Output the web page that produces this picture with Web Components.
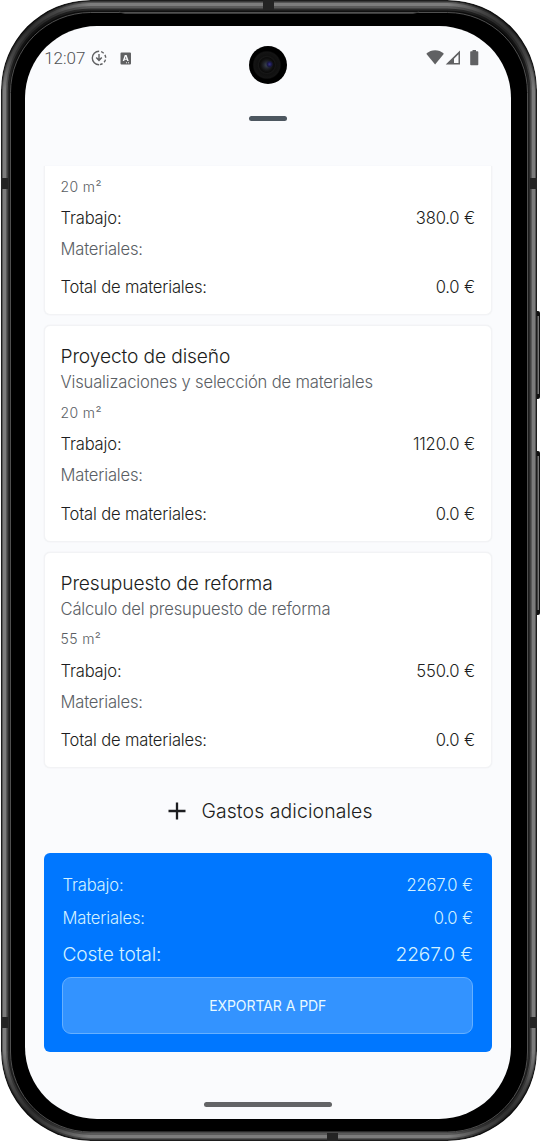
<!DOCTYPE html>
<html lang="es">
<head>
<meta charset="utf-8">
<title>Presupuesto</title>
<style>
html,body{margin:0;height:100%;background:#fff;overflow:hidden}
body{font-family:Inter,"Noto Sans",sans-serif;font-weight:280;color:#1c1d20}
</style>
</head>
<body>
<phone-frame>
  <status-bar>12:07</status-bar>
  <sheet-handle></sheet-handle>
  <budget-list>
    <budget-card continued area="20 m²" work="380.0 €" total="0.0 €"></budget-card>
    <budget-card area="20 m²" work="1120.0 €" total="0.0 €"><span slot="title">Proyecto de diseño</span><span slot="desc">Visualizaciones y selección de materiales</span></budget-card>
    <budget-card area="55 m²" work="550.0 €" total="0.0 €"><span slot="title">Presupuesto de reforma</span><span slot="desc">Cálculo del presupuesto de reforma</span></budget-card>
  </budget-list>
  <add-button>Gastos adicionales</add-button>
  <total-panel></total-panel>
  <home-bar></home-bar>
</phone-frame>
<script>
function define(name, html){
  customElements.define(name, class extends HTMLElement{
    constructor(){
      super();
      const t=document.createElement('template');
      t.innerHTML=typeof html==='function'?html(this):html;
      this.attachShadow({mode:'open'}).append(t.content.cloneNode(true));
    }
  });
}

define('phone-frame',`
<style>
:host{display:block;position:relative;box-sizing:border-box;width:540px;height:1141px;padding:26px 29px 22px 25px}
svg{position:absolute;left:0;top:0}
.screen{position:relative;box-sizing:border-box;height:1093px;border-radius:72px;background:#fafbfd;display:flex;flex-direction:column;padding:0 18.700px 0 18.700px;overflow:hidden}
.camera{position:absolute;left:249px;top:46px;width:38px;height:38px;border-radius:50%;
 background:radial-gradient(circle at 54% 48%,#35308a 0,#181742 8%,transparent 13%),radial-gradient(circle at 47% 50%,#3e4855 0,#22252c 12%,#111 22%,#0b0b0b 27%,#171717 30%,#101010 35%,#141414 47%,#000 52%)}
</style>
<svg width="540" height="1141" viewBox="0 0 540 1141">
 <defs>
  <radialGradient id="d"><stop offset="0" stop-color="#000" stop-opacity=".65"/><stop offset=".5" stop-color="#000" stop-opacity=".45"/><stop offset="1" stop-color="#000" stop-opacity="0"/></radialGradient>
  <clipPath id="c"><rect x="1" y="0" width="536" height="1141" rx="90"/></clipPath>
 </defs>
 <g fill="#111"><rect x="535" y="311" width="5" height="88" rx="2"/><rect x="535" y="451" width="5" height="164" rx="2"/></g>
 <g fill="#777"><rect x="537.5" y="316" width="1.5" height="78"/><rect x="537.5" y="456" width="1.5" height="154"/></g>
 <g clip-path="url(#c)">
 <rect x="1" y="0" width="536" height="1141" rx="90" fill="#1d1d1d"/>
 <rect x="2" y="1.5" width="534" height="1138" rx="89" fill="#555"/>
 <rect x="3" y="3" width="532" height="1135" rx="88" fill="#7c7c7c"/>
 <rect x="6" y="6" width="526" height="1129" rx="85" fill="#5a5a5a"/>
 <rect x="7.5" y="8.5" width="523" height="1124" rx="83" fill="#2b2b2b"/>
 <rect x="9.5" y="10.5" width="519" height="1120" rx="81" fill="#101010"/>
 <circle cx="26" cy="26" r="66" fill="url(#d)"/><circle cx="512" cy="26" r="66" fill="url(#d)"/>
 <circle cx="26" cy="1115" r="66" fill="url(#d)"/><circle cx="512" cy="1115" r="66" fill="url(#d)"/>
 <rect x="10.5" y="12.5" width="517" height="1119.5" rx="80" fill="#000" stroke="#505050"/>
 <path d="M119 12l6 1.5h288l6-1.5" fill="none" stroke="#3c3c3c"/>
 <g fill="#242424"><rect x="1" y="178" width="7" height="11"/><rect x="530" y="178" width="7" height="11"/><rect x="1" y="1017" width="7" height="11"/><rect x="530" y="1017" width="7" height="11"/><rect x="263" y="0" width="11" height="10"/><rect x="327" y="1133" width="11" height="8"/></g>
 </g>
</svg>
<div class="screen"><slot></slot></div>
<div class="camera"></div>`);

define('status-bar',`
<style>
:host{display:flex;align-items:center;height:64px;box-sizing:border-box;font:300 17px Roboto,sans-serif;color:#505153}
svg{display:block;fill:#606163}
.t{letter-spacing:0;width:47.300px;box-sizing:border-box;padding-left:.5px}.g{flex:1}
</style>
<span class="t"><slot></slot></span>
<svg width="16" height="16" viewBox="0 0 16 16"><circle cx="8" cy="8" r="6.7" fill="none" stroke="#606163" stroke-width="1.4" stroke-dasharray="21.05 2 3 2 3 2 3 2 3 1.04" transform="rotate(90 8 8)"/><path d="M7.3 4h1.4v4.6l1.6-1.6 1 1L8 11.4 4.700 8l1-1 1.600 1.600z"/></svg>
<svg width="12" height="13" viewBox="0 0 12 13" style="margin-left:13px"><path fill-rule="evenodd" d="M1.500 0.500h8.500a1 1 0 0 1 1 1v10a1 1 0 0 1-1 1h-8.500a1 1 0 0 1-1-1v-10a1 1 0 0 1 1-1zM4.800 3L2.700 9H4.200l.4-1.200h2.200L7.200 9h1.500L6.600 3zM5.700 4.500l.7 2.200H5z"/><path d="M6 10.300h1v1H6zM8 10.300h1v1H8z" fill="#eee"/></svg>
<span class="g"></span>
<svg width="54" height="18" viewBox="0 0 54 18" style="margin-right:12.300px"><path d="M.3 4.700C5.400.2 12.800.2 17.900 4.700L9.100 15.400z"/><path fill-rule="evenodd" d="M34 1.400V15.400H19.700zM32.500 5.200L28 9.800V13.900h4.500z"/><path d="M45 2.300h1.500V1h3.500v1.300h1.500q.8 0 .8.800v12.300q0 .8-.8.800H45q-.8 0-.8-.8V3.100q0-.8.800-.8z"/></svg>`);

define('sheet-handle',`
<style>:host{display:flex;justify-content:center;height:75.500px;padding-top:26.300px;box-sizing:border-box}i{width:38px;height:5px;border-radius:2.500px;background:#4d5760}</style><i></i>`);

define('budget-list',`<style>:host{display:flex;flex-direction:column;gap:10px}</style><slot></slot>`);

define('budget-card',e=>`
<style>
:host{display:block;box-sizing:border-box;height:216.400px;padding:17.100px 16.400px 0 15.800px;background:#fff;border:1px solid #f2f3f5;border-radius:6px;box-shadow:0 0 1.500px #e9ebee;font-size:16.600px;letter-spacing:-.18px}
:host([continued]){height:149.700px;padding-top:3.500px;border-top:0;border-radius:0 0 6px 6px;clip-path:inset(0 -3px -3px)}
div{display:flex;align-items:center;justify-content:space-between;white-space:pre}
.title{height:26px;font-size:19.200px;letter-spacing:-.12px}
.desc{height:26px;color:#5a5e64}
.area{height:34px;padding-top:.6px;box-sizing:border-box;font-size:14px;letter-spacing:.4px;color:#5a5e64}
.work{height:30.400px}.mat{height:31.600px;color:#5a5e64}.total{height:44.600px}
</style>
${e.hasAttribute('continued')?'':'<div class="title"><slot name="title"></slot></div><div class="desc"><slot name="desc"></slot></div>'}
<div class="area">${e.getAttribute('area')}</div>
<div class="work"><span>Trabajo:</span><span>${e.getAttribute('work')}</span></div>
<div class="mat">Materiales:</div>
<div class="total"><span>Total de materiales:</span><span>${e.getAttribute('total')}</span></div>`);

define('add-button',`
<style>:host{display:flex;align-items:center;justify-content:center;height:85.500px;gap:15px;padding-left:5px;font-size:19.400px;letter-spacing:.1px}svg{display:block}</style>
<svg width="18" height="18" viewBox="0 0 18 18"><path d="M9 .5v17M.5 9h17" stroke="#1c1d20" stroke-width="2.300"/></svg><span><slot></slot></span>`);

define('total-panel',`
<style>
:host{display:block;box-sizing:border-box;height:199px;padding:15px 19.400px 0 18.800px;background:#0077ff;border-radius:6px;color:#d3f1ff;font-size:16.600px;letter-spacing:-.18px}
div{display:flex;align-items:center;justify-content:space-between;height:33.200px}
.sum{height:37.600px;font-size:19.200px;letter-spacing:-.14px}
button{display:block;width:100%;height:57px;margin:4.700px 0 0;border:1px solid #66b0ff;border-radius:9px;background:#3393ff;color:#e8faff;font:400 14px Inter,sans-serif;letter-spacing:-.06px;padding:0}
</style>
<div><span>Trabajo:</span><span>2267.0 €</span></div>
<div><span>Materiales:</span><span>0.0 €</span></div>
<div class="sum"><span>Coste total:</span><span>2267.0 €</span></div>
<button>EXPORTAR A PDF</button>`);

define('home-bar',`<style>:host{display:flex;justify-content:center;margin-top:auto;height:17px}i{width:128px;height:5px;border-radius:2.500px;background:#636466}</style><i></i>`);
</script>
</body>
</html>
